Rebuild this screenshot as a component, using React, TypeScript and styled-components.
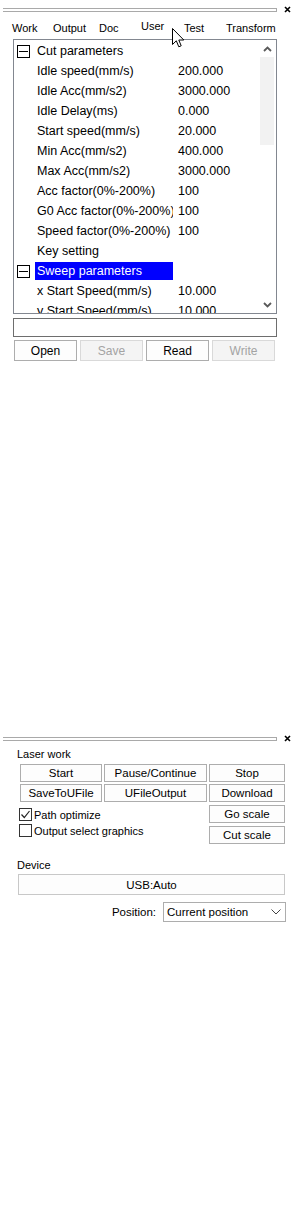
import React from "react";
import styled, { createGlobalStyle } from "styled-components";

const Global = createGlobalStyle`
  html, body { margin: 0; padding: 0; background: #fff; }
  body { font-family: "Liberation Sans", Arial, sans-serif; color: #000; }
`;

const Page = styled.div`
  width: 294px;
  height: 1232px;
  background: #fff;
  position: relative;
`;

const TopPanel = styled.div`
  height: 729px;
  display: flex;
  flex-direction: column;
`;

const DockHeader = styled.div`
  height: 19px;
  display: flex;
  align-items: flex-start;
  padding-top: 8px;
  box-sizing: border-box;
`;

const Grip = styled.div`
  margin-left: 3px;
  width: 274px;
  height: 4px;
  box-sizing: border-box;
  border-top: 1px solid #a9a9a9;
  border-bottom: 1px solid #a9a9a9;
  border-right: 1px solid #a9a9a9;
`;

const Close = styled.svg`
  margin-left: 7px;
  margin-top: -2px;
`;

const TabRow = styled.div`
  position: relative;
  height: 18px;
  display: flex;
  align-items: center;
  padding-left: 12px;
  font-size: 11px;
`;

const Tab = styled.div<{ $w: number; $active?: boolean }>`
  width: ${(p) => p.$w}px;
  flex: none;
  white-space: nowrap;
  position: relative;
  top: ${(p) => (p.$active ? -2 : 0)}px;
`;

const Cursor = styled.svg`
  position: absolute;
  left: 172px;
  top: 9px;
  z-index: 2;
`;

const Tree = styled.div`
  margin-top: 2px;
  margin-left: 13px;
  width: 264px;
  height: 275px;
  box-sizing: border-box;
  border: 1px solid #828790;
  display: flex;
  overflow: hidden;
`;

const List = styled.div`
  flex: 1;
  padding-top: 1px;
  font-size: 12.5px;
  min-width: 0;
`;

const Row = styled.div<{ $indent: number }>`
  height: 20px;
  display: flex;
  align-items: center;
  padding-left: ${(p) => p.$indent}px;
  white-space: nowrap;
`;

const Expander = styled.div`
  width: 13px;
  height: 13px;
  box-sizing: border-box;
  border: 1px solid #000;
  display: flex;
  align-items: center;
  justify-content: center;
  margin-right: 5px;
  flex: none;
  &::after {
    content: "";
    width: 9px;
    height: 1px;
    background: #000;
  }
`;

const Label = styled.div<{ $selected?: boolean }>`
  width: 138px;
  height: 18px;
  line-height: 18px;
  box-sizing: border-box;
  padding: 0 2px;
  overflow: hidden;
  flex: none;
  background: ${(p) => (p.$selected ? "#0000ff" : "transparent")};
  color: ${(p) => (p.$selected ? "#fff" : "#000")};
`;

const Value = styled.div`
  margin-left: 5px;
`;

const ScrollBar = styled.div`
  width: 17px;
  flex: none;
  display: flex;
  flex-direction: column;
  align-items: center;
`;

const ArrowCell = styled.div`
  height: 17px;
  width: 17px;
  display: flex;
  align-items: center;
  justify-content: center;
`;

const Thumb = styled.div`
  width: 14px;
  height: 88px;
  background: #f2f2f2;
  margin-left: -2px;
`;

const Spring = styled.div`
  flex: 1;
`;

const PathInput = styled.div`
  margin-top: 4px;
  margin-left: 13px;
  width: 264px;
  height: 19px;
  box-sizing: border-box;
  border: 1px solid #6e6e6e;
`;

const FileButtons = styled.div`
  margin-top: 3px;
  margin-left: 14px;
  display: grid;
  grid-template-columns: repeat(4, 63px);
  column-gap: 3px;
`;

const Button = styled.div<{ $disabled?: boolean; $h?: number; $fs?: number }>`
  height: ${(p) => p.$h ?? 21}px;
  box-sizing: border-box;
  border: 1px solid ${(p) => (p.$disabled ? "#d9d9d9" : "#adadad")};
  background: ${(p) => (p.$disabled ? "#f4f4f4" : "#fdfdfd")};
  color: ${(p) => (p.$disabled ? "#a3a3a3" : "#000")};
  display: flex;
  align-items: center;
  justify-content: center;
  font-size: ${(p) => p.$fs ?? 12}px;
  white-space: nowrap;
`;

const BottomPanel = styled.div`
  display: flex;
  flex-direction: column;
  font-size: 11px;
`;

const SectionLabel = styled.div<{ $mt: number }>`
  margin-top: ${(p) => p.$mt}px;
  padding-left: 17px;
  height: 12px;
  line-height: 12px;
`;

const WorkGrid = styled.div`
  margin-top: 4px;
  margin-left: 20px;
  display: grid;
  grid-template-columns: 82px 103px 76px;
  column-gap: 2px;
  row-gap: 2px;
`;

const OptionsArea = styled.div`
  margin-top: 3px;
  margin-left: 19px;
  display: flex;
  justify-content: space-between;
  width: 266px;
`;

const Checks = styled.div`
  padding-top: 3px;
  display: flex;
  flex-direction: column;
  gap: 3px;
`;

const CheckRow = styled.div`
  display: flex;
  align-items: center;
  height: 13px;
  white-space: nowrap;
`;

const Box = styled.div`
  width: 13px;
  height: 13px;
  box-sizing: border-box;
  border: 1px solid #333;
  background: #fff;
  margin-right: 2px;
  display: flex;
  align-items: center;
  justify-content: center;
  flex: none;
`;

const ScaleButtons = styled.div`
  display: grid;
  grid-template-columns: 76px;
  row-gap: 3px;
`;

const DeviceBox = styled.div`
  margin-top: 3px;
  margin-left: 18px;
  width: 267px;
  height: 21px;
  box-sizing: border-box;
  border: 1px solid #c8c8c8;
  background: #fdfdfd;
  display: flex;
  align-items: center;
  justify-content: center;
  font-size: 11.5px;
`;

const PositionRow = styled.div`
  margin-top: 7px;
  display: flex;
  justify-content: flex-end;
  align-items: center;
  padding-right: 8px;
  gap: 7px;
  font-size: 11.5px;
`;

const Select = styled.div`
  width: 123px;
  height: 20px;
  box-sizing: border-box;
  border: 1px solid #adadad;
  background: #fff;
  display: flex;
  align-items: center;
  padding-left: 3px;
  padding-right: 4px;
  justify-content: space-between;
`;

const Chevron = ({ up }: { up?: boolean }) => (
  <svg width="9" height="6" viewBox="0 0 9 6">
    <path
      d={up ? "M1 5 L4.5 1.5 L8 5" : "M1 1 L4.5 4.5 L8 1"}
      fill="none"
      stroke="#5a5a5a"
      strokeWidth="1.8"
    />
  </svg>
);

type Item = { label: string; value?: string; parent?: boolean; selected?: boolean };

const items: Item[] = [
  { label: "Cut parameters", parent: true },
  { label: "Idle speed(mm/s)", value: "200.000" },
  { label: "Idle Acc(mm/s2)", value: "3000.000" },
  { label: "Idle Delay(ms)", value: "0.000" },
  { label: "Start speed(mm/s)", value: "20.000" },
  { label: "Min Acc(mm/s2)", value: "400.000" },
  { label: "Max Acc(mm/s2)", value: "3000.000" },
  { label: "Acc factor(0%-200%)", value: "100" },
  { label: "G0 Acc factor(0%-200%)", value: "100" },
  { label: "Speed factor(0%-200%)", value: "100" },
  { label: "Key setting" },
  { label: "Sweep parameters", parent: true, selected: true },
  { label: "x Start Speed(mm/s)", value: "10.000" },
  { label: "y Start Speed(mm/s)", value: "10.000" },
];

const tabs = [
  { t: "Work", w: 41 },
  { t: "Output", w: 46 },
  { t: "Doc", w: 42 },
  { t: "User", w: 43, active: true },
  { t: "Test", w: 42 },
  { t: "Transform", w: 60 },
];

const CloseIcon = () => (
  <Close width="7" height="7" viewBox="0 0 7 7">
    <path d="M1 1 L6 6 M6 1 L1 6" stroke="#000" strokeWidth="1.6" />
  </Close>
);

export default function App() {
  return (
    <Page>
      <Global />
      <TopPanel>
        <DockHeader>
          <Grip />
          <CloseIcon />
        </DockHeader>
        <TabRow>
          {tabs.map((t) => (
            <Tab key={t.t} $w={t.w} $active={t.active}>
              {t.t}
            </Tab>
          ))}
          <Cursor width="13" height="20" viewBox="0 0 13 20">
            <path
              d="M0.5 0.5 L0.5 16.5 L4.3 12.8 L6.8 18.8 L9.2 17.8 L6.8 12 L11.8 12 Z"
              fill="#fff"
              stroke="#000"
              strokeWidth="1"
              strokeLinejoin="miter"
            />
          </Cursor>
        </TabRow>
        <Tree>
          <List>
            {items.map((it) => (
              <Row key={it.label} $indent={it.parent ? 3 : 21}>
                {it.parent && <Expander />}
                <Label $selected={it.selected}>{it.label}</Label>
                {it.value && <Value>{it.value}</Value>}
              </Row>
            ))}
          </List>
          <ScrollBar>
            <ArrowCell>
              <Chevron up />
            </ArrowCell>
            <Thumb />
            <Spring />
            <ArrowCell>
              <Chevron />
            </ArrowCell>
          </ScrollBar>
        </Tree>
        <PathInput />
        <FileButtons>
          <Button>Open</Button>
          <Button $disabled>Save</Button>
          <Button>Read</Button>
          <Button $disabled>Write</Button>
        </FileButtons>
      </TopPanel>
      <BottomPanel>
        <DockHeader>
          <Grip />
          <CloseIcon />
        </DockHeader>
        <SectionLabel $mt={0}>Laser work</SectionLabel>
        <WorkGrid>
          <Button $h={18} $fs={11.5}>Start</Button>
          <Button $h={18} $fs={11.5}>Pause/Continue</Button>
          <Button $h={18} $fs={11.5}>Stop</Button>
          <Button $h={18} $fs={11.5}>SaveToUFile</Button>
          <Button $h={18} $fs={11.5}>UFileOutput</Button>
          <Button $h={18} $fs={11.5}>Download</Button>
        </WorkGrid>
        <OptionsArea>
          <Checks>
            <CheckRow>
              <Box>
                <svg width="11" height="11" viewBox="0 0 11 11">
                  <path d="M1.5 5.5 L4.3 8.5 L9.5 2" fill="none" stroke="#222" strokeWidth="1.2" />
                </svg>
              </Box>
              Path optimize
            </CheckRow>
            <CheckRow>
              <Box />
              Output select graphics
            </CheckRow>
          </Checks>
          <ScaleButtons>
            <Button $h={18} $fs={11.5}>Go scale</Button>
            <Button $h={18} $fs={11.5}>Cut scale</Button>
          </ScaleButtons>
        </OptionsArea>
        <SectionLabel $mt={15}>Device</SectionLabel>
        <DeviceBox>USB:Auto</DeviceBox>
        <PositionRow>
          <span>Position:</span>
          <Select>
            <span>Current position</span>
            <svg width="10" height="6" viewBox="0 0 10 6">
              <path d="M0.5 0.5 L5 5 L9.5 0.5" fill="none" stroke="#444" strokeWidth="1" />
            </svg>
          </Select>
        </PositionRow>
      </BottomPanel>
    </Page>
  );
}
